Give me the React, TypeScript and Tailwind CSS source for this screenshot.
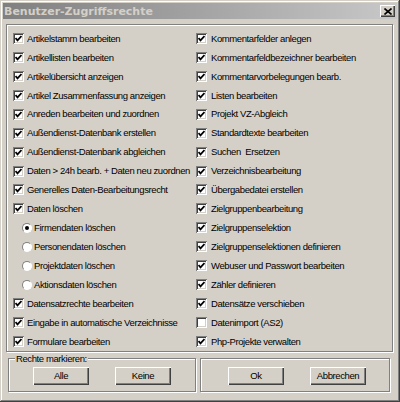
import React from "react";

const left: { label: string; checked?: boolean; radio?: boolean; selected?: boolean }[] = [
  { label: "Artikelstamm bearbeiten", checked: true },
  { label: "Artikellisten bearbeiten", checked: true },
  { label: "Artikelübersicht anzeigen", checked: true },
  { label: "Artikel Zusammenfassung anzeigen", checked: true },
  { label: "Anreden bearbeiten und zuordnen", checked: true },
  { label: "Außendienst-Datenbank erstellen", checked: true },
  { label: "Außendienst-Datenbank abgleichen", checked: true },
  { label: "Daten > 24h bearb. + Daten neu zuordnen", checked: true },
  { label: "Generelles Daten-Bearbeitungsrecht", checked: true },
  { label: "Daten löschen", checked: true },
  { label: "Firmendaten löschen", radio: true, selected: true },
  { label: "Personendaten löschen", radio: true },
  { label: "Projektdaten löschen", radio: true },
  { label: "Aktionsdaten löschen", radio: true },
  { label: "Datensatzrechte bearbeiten", checked: true },
  { label: "Eingabe in automatische Verzeichnisse", checked: true },
  { label: "Formulare bearbeiten", checked: true },
];

const right: { label: string; checked: boolean }[] = [
  { label: "Kommentarfelder anlegen", checked: true },
  { label: "Kommentarfeldbezeichner bearbeiten", checked: true },
  { label: "Kommentarvorbelegungen bearb.", checked: true },
  { label: "Listen bearbeiten", checked: true },
  { label: "Projekt VZ-Abgleich", checked: true },
  { label: "Standardtexte bearbeiten", checked: true },
  { label: "Suchen  Ersetzen", checked: true },
  { label: "Verzeichnisbearbeitung", checked: true },
  { label: "Übergabedatei erstellen", checked: true },
  { label: "Zielgruppenbearbeitung", checked: true },
  { label: "Zielgruppenselektion", checked: true },
  { label: "Zielgruppenselektionen definieren", checked: true },
  { label: "Webuser und Passwort bearbeiten", checked: true },
  { label: "Zähler definieren", checked: true },
  { label: "Datensätze verschieben", checked: true },
  { label: "Datenimport (AS2)", checked: false },
  { label: "Php-Projekte verwalten", checked: true },
];

function CheckBox({ checked }: { checked: boolean }) {
  return (
    <span className="relative inline-flex w-[11px] h-[11px] shrink-0 bg-white shadow-[inset_1px_1px_0_#808080,inset_-1px_-1px_0_#ffffff,inset_2px_2px_0_#404040,inset_-2px_-2px_0_#d4d0c8] items-center justify-center">
      {checked && (
        <svg width="7" height="7" viewBox="0 0 7 7" className="block">
          <path d="M0.5 3 L2.5 5.3 L6.5 1" fill="none" stroke="#000" strokeWidth="1.8" />
        </svg>
      )}
    </span>
  );
}

function Radio({ selected }: { selected?: boolean }) {
  return (
    <span className="relative inline-flex w-[10px] h-[10px] shrink-0 rounded-full bg-white border border-t-[#808080] border-l-[#808080] border-b-[#ffffff] border-r-[#ffffff] items-center justify-center">
      {selected && <span className="block w-[4px] h-[4px] rounded-full bg-black" />}
    </span>
  );
}

function Button({ children }: { children: React.ReactNode }) {
  return (
    <div className="w-[56px] h-[18px] bg-[#d4d0c8] flex items-center justify-center text-black shadow-[inset_1px_1px_0_#ffffff,inset_-1px_-1px_0_#404040,inset_-2px_-2px_0_#808080]">
      {children}
    </div>
  );
}

export default function App() {
  return (
    <div
      className="w-[400px] h-[402px] bg-[#d4d0c8] p-[3px] flex flex-col text-[9.5px] tracking-[-0.4px] leading-none text-black shadow-[inset_-1px_-1px_0_#404040,inset_1px_1px_0_#d4d0c8,inset_-2px_-2px_0_#808080,inset_2px_2px_0_#ffffff]"
      style={{ fontFamily: '"Liberation Sans", Arial, sans-serif' }}
    >
      {/* Title bar */}
      <div className="h-[16px] flex items-center justify-between bg-gradient-to-r from-[#808080] to-[#c8c8c8] pl-[1px] pr-[2px]">
        <span
          className="font-bold text-[#d4d0c8] text-[11px] tracking-normal"
          style={{ fontFamily: '"DejaVu Sans", sans-serif' }}
        >
          Benutzer-Zugriffsrechte
        </span>
        <div className="w-[15px] h-[12px] bg-[#d4d0c8] flex items-center justify-center shadow-[inset_1px_1px_0_#ffffff,inset_-1px_-1px_0_#404040,inset_-2px_-2px_0_#808080]">
          <svg width="8" height="7" viewBox="0 0 8 7">
            <path d="M0.5 0.5 L7.5 6.5 M7.5 0.5 L0.5 6.5" stroke="#000" strokeWidth="1.6" />
          </svg>
        </div>
      </div>

      {/* Main frame */}
      <div className="mt-[5px] ml-[3px] mr-[4px] h-[328px] border border-[#808080] shadow-[1px_1px_0_#ffffff,inset_1px_1px_0_#ffffff] flex pt-[4px]">
        <div className="w-[189px] flex flex-col">
          {left.map((it) => (
            <div key={it.label} className={`h-[19px] flex items-center ${it.radio ? "pl-[15px] gap-[2px]" : "pl-[6px] gap-[3px]"}`}>
              {it.radio ? <Radio selected={it.selected} /> : <CheckBox checked={!!it.checked} />}
              <span className="whitespace-pre">{it.label}</span>
            </div>
          ))}
        </div>
        <div className="flex-1 flex flex-col">
          {right.map((it) => (
            <div key={it.label} className="h-[19px] flex items-center pl-[0px] gap-[4px]">
              <CheckBox checked={it.checked} />
              <span className="whitespace-pre">{it.label}</span>
            </div>
          ))}
        </div>
      </div>

      {/* Bottom groups */}
      <div className="mt-[6px] flex pl-[5px] pr-[7px] gap-[4px]">
        <div className="relative w-[188px] h-[34px] border border-[#808080] shadow-[1px_1px_0_#ffffff,inset_1px_1px_0_#ffffff] flex items-center pl-[24px] gap-[26px] pt-[1px]">
          <span className="absolute left-[6px] top-[-5px] bg-[#d4d0c8] px-[1px]">Rechte markieren:</span>
          <Button>Alle</Button>
          <Button>Keine</Button>
        </div>
        <div className="flex-1 h-[34px] border border-[#808080] shadow-[1px_1px_0_#ffffff,inset_1px_1px_0_#ffffff] flex items-center pl-[27px] gap-[26px] pt-[1px]">
          <Button>Ok</Button>
          <Button>Abbrechen</Button>
        </div>
      </div>
    </div>
  );
}
